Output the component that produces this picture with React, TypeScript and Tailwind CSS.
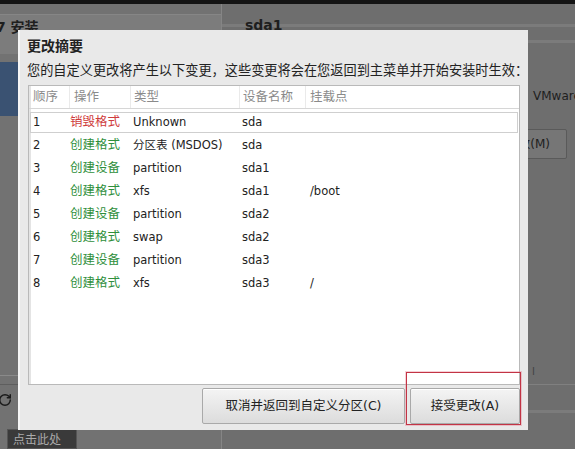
import { RotateCw } from "lucide-react";

type Row = { seq: number; action: string; destroy?: boolean; type: string; device: string; mount: string };

const rows: Row[] = [
  { seq: 1, action: "销毁格式", destroy: true, type: "Unknown", device: "sda", mount: "" },
  { seq: 2, action: "创建格式", type: "分区表 (MSDOS)", device: "sda", mount: "" },
  { seq: 3, action: "创建设备", type: "partition", device: "sda1", mount: "" },
  { seq: 4, action: "创建格式", type: "xfs", device: "sda1", mount: "/boot" },
  { seq: 5, action: "创建设备", type: "partition", device: "sda2", mount: "" },
  { seq: 6, action: "创建格式", type: "swap", device: "sda2", mount: "" },
  { seq: 7, action: "创建设备", type: "partition", device: "sda3", mount: "" },
  { seq: 8, action: "创建格式", type: "xfs", device: "sda3", mount: "/" },
];

const cols = "grid grid-cols-[40px_61px_109px_66px_1fr]";

export default function App() {
  return (
    <div
      className="relative w-[575px] h-[449px] overflow-hidden bg-[#6e6e6e] text-[#1e1e1e]"
      style={{ fontFamily: '"DejaVu Sans", "Noto Sans CJK SC", sans-serif' }}
    >
      {/* installer window behind the dialog */}
      <div className="h-[4px] bg-[#141414]" />
      <div className="flex h-[445px]">
        <aside className="w-[222px] shrink-0 flex flex-col bg-[#727272] border-r border-[#858585]">
          <div className="h-[10px]" />
          <div className="h-[40px] border-t border-[#868686] bg-[#7c7c7c]">
            <span className="-ml-[4px] text-[14px] leading-none font-bold">7 安装</span>
          </div>
          <div className="h-[8px]" />
          <div className="h-[54px] bg-[#3a5272]" />
          <div className="flex-1" />
          <div className="h-[10px] border-t border-[#8a8a8a] border-b border-b-[#5e5e5e]" />
          <div className="h-[30px] flex items-center">
            <RotateCw className="w-[14px] h-[14px] -ml-[2px] text-[#1a1a1a]" strokeWidth={2.5} />
          </div>
          <div className="h-[14px]" />
          <div className="ml-[7px] w-[70px] h-[20px] bg-[#3a3a3a] border border-[#555] px-[5px] pt-[4px] text-[12px] text-[#aaa] leading-none">
            点击此处
          </div>
        </aside>
        <main className="flex-1 min-w-0 flex flex-col">
          <div className="h-[23px] border-b-[3px] border-[#7b7b7b] pl-[23px] pt-[14px] text-[14px] leading-none font-bold whitespace-nowrap">
            sda1
          </div>
          <div className="h-[16px] border-b-[3px] border-[#7b7b7b]" />
          <div className="h-[47px]" />
          <div className="flex pl-[311px] text-[12px] leading-none whitespace-nowrap">
            <span className="shrink-0">VMware Virtual disk</span>
          </div>
          <div className="h-[27px]" />
          <div className="ml-[218px] w-[127px] h-[30px] bg-[#767676] border border-[#5a5a5a] rounded-[2px] flex items-center justify-end pr-[16px] text-[12px]">
            修改(M)
          </div>
          <div className="flex-1" />
          <div className="pl-[310px] text-[10px] leading-none text-[#444]">I</div>
          <div className="h-[8px] border-b border-[#808080]" />
          <div className="h-[28px] border-b-[3px] border-[#7b7b7b]" />
          <div className="h-[36px]" />
        </main>
      </div>

      {/* summary dialog */}
      <div className="absolute left-[18px] top-[30px] w-[510px] h-[400px] bg-[#e9e9e9] border-l-2 border-[#f6f6f6] flex flex-col pl-[7px] pr-[8px] pt-[7px]">
        <div className="h-[18px] text-[14px] leading-[18px] font-bold text-[#222]">更改摘要</div>
        <div className="mt-[7px] h-[18px] text-[13.2px] leading-[18px] whitespace-nowrap text-[#222]">
          您的自定义更改将产生以下变更，这些变更将会在您返回到主菜单并开始安装时生效：
        </div>
        <div className="mt-[5px] h-[300px] bg-white border border-[#b9b9b9] ml-[1px] shadow-[inset_2px_0_0_#e4e4e4]">
          <div className={`${cols} h-[23px] items-center border-b border-[#d6d6d6] text-[12.5px] text-[#8a8a8a]`}>
            <div className="pl-[4px]">顺序</div>
            <div className="pl-[4px] border-l border-[#eaeaea] h-full flex items-center">操作</div>
            <div className="pl-[3px] border-l border-[#eaeaea] h-full flex items-center">类型</div>
            <div className="pl-[3px] border-l border-[#eaeaea] h-full flex items-center">设备名称</div>
            <div className="pl-[4px] border-l border-[#eaeaea] h-full flex items-center">挂载点</div>
          </div>
          <div className="pt-[2px] text-[11.5px] text-[#222]">
            {rows.map((r) => (
              <div
                key={r.seq}
                className={`${cols} h-[23px] items-center ${r.seq === 1 ? "outline outline-1 -outline-offset-2 outline-[#cfcfcf]" : ""}`}
              >
                <div className="pl-[4px]">{r.seq}</div>
                <div className={`pl-[1px] text-[12.5px] ${r.destroy ? "text-[#cf3b3b]" : "text-[#2f8f3c]"}`}>{r.action}</div>
                <div className="pl-[3px] whitespace-nowrap">{r.type}</div>
                <div className="pl-[3px]">{r.device}</div>
                <div className="pl-[5px]">{r.mount}</div>
              </div>
            ))}
          </div>
        </div>
        <div className="mt-[3px] flex justify-end gap-[5px] text-[12.5px] text-[#222]">
          <button className="w-[203px] h-[36px] rounded-[2px] border border-[#a9a9a9] bg-gradient-to-b from-[#f4f4f4] to-[#dcdcdc] shadow-[inset_0_1px_0_#fff]">
            取消并返回到自定义分区(C)
          </button>
          <button className="w-[110px] h-[36px] rounded-[2px] border border-[#a9a9a9] bg-gradient-to-b from-[#f4f4f4] to-[#dcdcdc] shadow-[inset_0_1px_0_#fff]">
            接受更改(A)
          </button>
        </div>
      </div>

      {/* red annotation box */}
      <div className="absolute left-[406px] top-[372px] w-[115px] h-[53px] border border-[#c23445] shadow-[0_0_0_1px_rgba(230,120,140,0.35)]" />
    </div>
  );
}
